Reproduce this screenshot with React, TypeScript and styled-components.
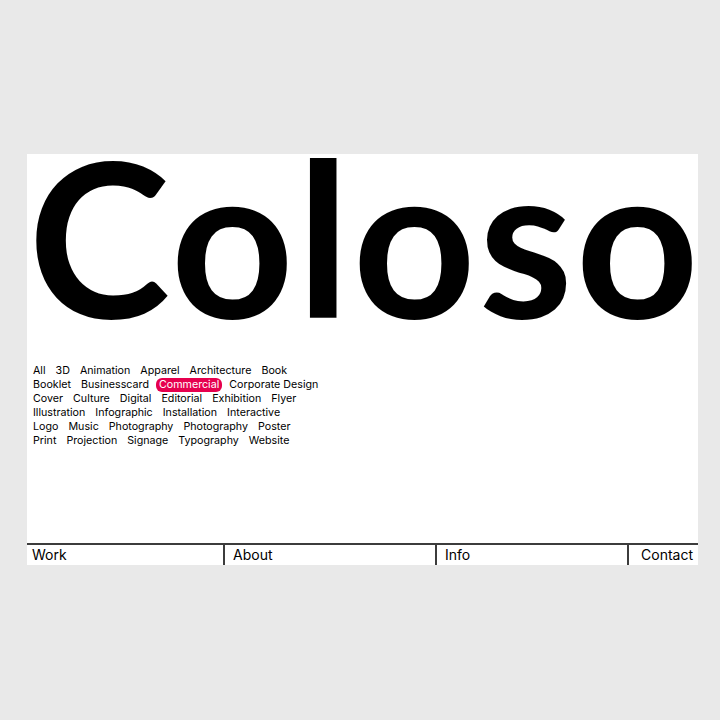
import styled, { createGlobalStyle } from "styled-components";

const Global = createGlobalStyle`
	html, body {
		margin: 0;
		padding: 0;
		background: #e9e9e9;
	}
	body {
		font-family: Inter, "Noto Sans", sans-serif;
		color: #000;
	}
`;

const Page = styled.div`
	padding: 154px 0 0 27px;
`;

const Panel = styled.div`
	width: 671px;
	height: 411px;
	background: #fff;
	display: flex;
	flex-direction: column;
`;

const Title = styled.h1`
	margin: 0;
	padding-left: 1px;
	font-family: Lato, sans-serif;
	font-weight: 700;
	font-size: 215px;
	line-height: 162px;
	letter-spacing: 2.5px;
	white-space: nowrap;
`;

const Tags = styled.div`
	margin-top: 48px;
	padding-left: 6px;
	display: flex;
	flex-direction: column;
`;

const TagRow = styled.div`
	display: flex;
	column-gap: 10px;
	height: 14px;
	line-height: 14px;
	font-size: 10.7px;
`;

const Tag = styled.span<{ $active?: boolean }>`
	padding: 0 ${(p) => (p.$active ? "3px" : "0")};
	margin: 0 ${(p) => (p.$active ? "-3px" : "0")};
	border-radius: 6px;
	background: ${(p) => (p.$active ? "#e6004e" : "transparent")};
	color: ${(p) => (p.$active ? "#fff" : "#000")};
	white-space: nowrap;
`;

const Spacer = styled.div`
	flex: 1;
`;

const Nav = styled.nav`
	display: grid;
	grid-template-columns: 196px 212px 192px 1fr;
	height: 22px;
	border-top: 2px solid #3c3c3c;
	box-sizing: border-box;
`;

const NavItem = styled.a<{ $right?: boolean }>`
	font-size: 14px;
	line-height: 20px;
	padding: 0 5px 0 ${(p) => (p.$right ? "0" : "5px")};
	text-align: ${(p) => (p.$right ? "right" : "left")};
	color: #000;
	text-decoration: none;
	& + & {
		border-left: 2px solid #3c3c3c;
		padding-left: 8px;
	}
`;

const rows = [
	["All", "3D", "Animation", "Apparel", "Architecture", "Book"],
	["Booklet", "Businesscard", "Commercial", "Corporate Design"],
	["Cover", "Culture", "Digital", "Editorial", "Exhibition", "Flyer"],
	["Illustration", "Infographic", "Installation", "Interactive"],
	["Logo", "Music", "Photography", "Photography", "Poster"],
	["Print", "Projection", "Signage", "Typography", "Website"],
];

export default function App() {
	return (
		<>
			<Global />
			<Page>
				<Panel>
					<Title>Coloso</Title>
					<Tags>
						{rows.map((row, i) => (
							<TagRow key={i}>
								{row.map((t, j) => (
									<Tag key={j} $active={t === "Commercial"}>
										{t}
									</Tag>
								))}
							</TagRow>
						))}
					</Tags>
					<Spacer />
					<Nav>
						<NavItem href="#">Work</NavItem>
						<NavItem href="#">About</NavItem>
						<NavItem href="#">Info</NavItem>
						<NavItem href="#" $right>
							Contact
						</NavItem>
					</Nav>
				</Panel>
			</Page>
		</>
	);
}
